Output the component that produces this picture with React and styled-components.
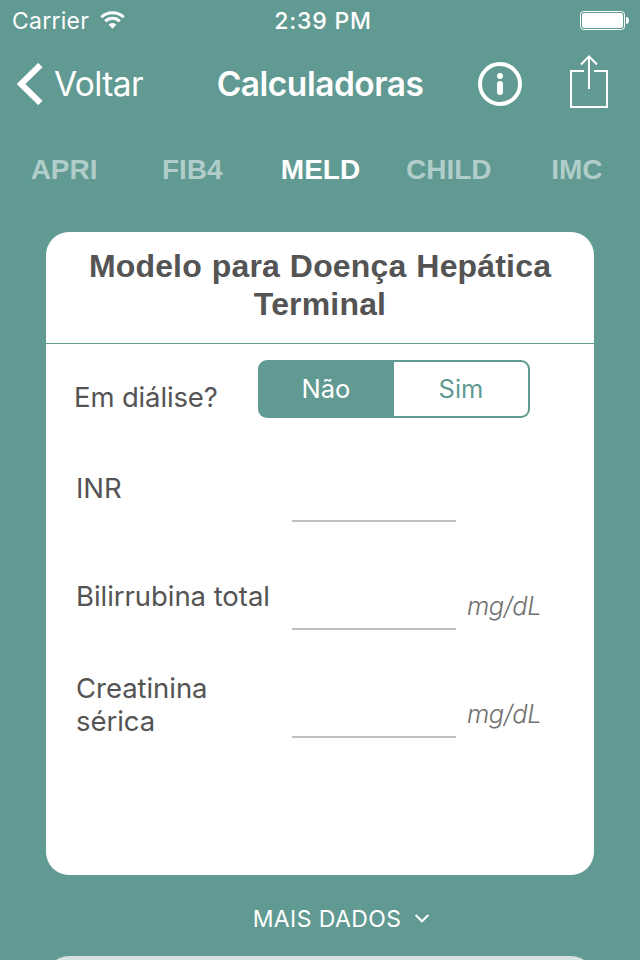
import React, { useState } from "react";
import styled, { createGlobalStyle } from "styled-components";

const GlobalStyle = createGlobalStyle`
    body {
        margin: 0;
        background: #619a92;
    }
    * {
        box-sizing: border-box;
    }
    button {
        padding: 0;
        border: 0;
        background: none;
        color: inherit;
        font: inherit;
        letter-spacing: inherit;
    }
    svg {
        display: block;
    }
`;

const Screen = styled.div`
    width: 640px;
    height: 960px;
    overflow: hidden;
    display: flex;
    flex-direction: column;
    background: #619a92;
    color: #fff;
    font-family: Inter, sans-serif;
`;

const StatusBar = styled.div`
    height: 40px;
    flex: none;
    padding: 0 11px 0 12px;
    display: grid;
    grid-template-columns: 1fr auto 1fr;
    align-items: center;
    font-size: 23px;
    line-height: 42px;
    svg {
        margin-bottom: 2px;
    }
`;

const Carrier = styled.div`
    display: flex;
    align-items: center;
    gap: 11px;
    letter-spacing: 0.25px;
`;

const Clock = styled.div`
    font-weight: 500;
    letter-spacing: 0.8px;
    padding-left: 5px;
`;

const Battery = styled.div`
    justify-self: end;
`;

const NavBar = styled.div`
    height: 88px;
    flex: none;
    padding: 0 32px 0 16px;
    display: grid;
    grid-template-columns: 1fr auto 1fr;
    align-items: center;
    font-size: 33.5px;
    line-height: 88px;
`;

const BackButton = styled.button`
    display: flex;
    align-items: center;
    gap: 11px;
    letter-spacing: -0.6px;
`;

const Title = styled.div`
    font-weight: 600;
    letter-spacing: -0.5px;
    padding-left: 16px;
`;

const Actions = styled.div`
    display: flex;
    justify-content: flex-end;
    align-items: center;
    gap: 48px;
`;

const Tabs = styled.div`
    height: 104px;
    flex: none;
    display: flex;
    align-items: flex-start;
    margin-right: -1px;
    padding-top: 22px;
    font: bold 28px/40px "Liberation Sans", sans-serif;
`;

const Tab = styled.button`
    flex: 1;
    text-align: center;
    color: ${(props) => (props.$active ? "#fff" : "#b0cdc9")};
`;

const Card = styled.div`
    height: 643px;
    flex: none;
    margin: 0 46px;
    border-radius: 23px;
    background: #fff;
    color: #545454;
`;

const CardTitle = styled.div`
    height: 112px;
    padding: 15px 30px 0;
    border-bottom: 1px solid #619a92;
    text-align: center;
    font: bold 32px/38px "Liberation Sans", sans-serif;
    letter-spacing: 0.17px;
    word-spacing: 0.8px;
`;

const Row = styled.div`
    height: 108px;
    display: flex;
    padding-left: 30px;
`;

const DialysisRow = styled(Row)`
    height: 91px;
    padding: 16px 0 0 28px;
`;

const Label = styled.div`
    width: 216px;
    padding: 0 20px 1px 0;
    align-self: center;
    font-size: 27.5px;
    line-height: 33px;
    letter-spacing: -0.05px;
`;

const DialysisLabel = styled(Label)`
    width: 184px;
    padding: 21px 0 0;
    align-self: flex-start;
    letter-spacing: -0.15px;
`;

const Segmented = styled.div`
    width: 272px;
    height: 58px;
    padding: 2px;
    display: flex;
    border-radius: 9px;
    background: #619a92;
`;

const Segment = styled.button`
    width: 134px;
    padding: 0 1px;
    font-size: 25.5px;
    line-height: 54px;
    color: ${(props) => (props.$active ? "#fff" : "#619a92")};
    background: ${(props) => (props.$active ? "#619a92" : "#fff")};
    &:first-child {
        border-radius: 7px 0 0 7px;
        padding-right: 3px;
    }
    &:last-child {
        border-radius: 0 7px 7px 0;
    }
`;

const Field = styled.input`
    width: 164px;
    height: 54px;
    margin-top: 33px;
    padding: 0;
    border: 0;
    border-bottom: 2px solid #c0c0c0;
    outline: 0;
    background: transparent;
    color: inherit;
    font: inherit;
    font-size: 27px;
`;

const Unit = styled.div`
    margin: 47px 0 0 11px;
    font-size: 25.5px;
    font-style: italic;
    font-weight: 300;
    line-height: 32px;
    letter-spacing: -0.4px;
    color: #707070;
`;

const MoreButton = styled.button`
    height: 81px;
    flex: none;
    padding: 6px 0 0 42px;
    display: flex;
    justify-content: center;
    align-items: center;
    gap: 14px;
    font-size: 23px;
    letter-spacing: 0.4px;
`;

const NextCard = styled.div`
    height: 60px;
    flex: none;
    margin: 0 46px;
    border-radius: 23px;
    background: #d7e1e0;
`;

const WifiIcon = () => (
    <svg width="25" height="18" viewBox="0 0 25 18" fill="none" stroke="#fff" strokeWidth="3">
        <path d="M1.3 6.3a16 16 0 0 1 22.4 0" />
        <path d="M5.2 10.3a10.4 10.4 0 0 1 14.6 0" />
        <path d="M12.5 17.7 8.6 13.6a5.6 5.6 0 0 1 7.8 0z" fill="#fff" stroke="none" />
    </svg>
);

const BatteryIcon = () => (
    <svg width="49" height="19" viewBox="0 0 49 19">
        <rect x="0.5" y="0.5" width="44" height="18" rx="3" fill="none" stroke="#fff" />
        <rect x="2" y="2" width="41" height="15" rx="2" fill="#fff" />
        <path d="M46 6c4 0 4 7 0 7z" fill="#fff" />
    </svg>
);

const BackIcon = () => (
    <svg width="27" height="42" viewBox="0 0 27 42" fill="none" stroke="#fff" strokeWidth="6">
        <path d="M24.4 2 5 21l19.4 19" />
    </svg>
);

const InfoIcon = () => (
    <svg width="44" height="44" viewBox="0 0 44 44" fill="none" stroke="#fff">
        <circle cx="22" cy="22" r="20" strokeWidth="4" />
        <circle cx="22" cy="14" r="3" fill="#fff" stroke="none" />
        <path d="M22 22v8" strokeWidth="6" strokeLinecap="round" />
    </svg>
);

const ShareIcon = () => (
    <svg width="38" height="58" viewBox="0 0 38 58" fill="none" stroke="#fff" strokeWidth="2">
        <path d="M14 16H1v36h36V16H24" />
        <path d="M19 34V2" />
        <path d="M11 9.5l8-8 8 8" />
    </svg>
);

const ChevronIcon = () => (
    <svg width="14" height="9" viewBox="0 0 14 9" fill="none" stroke="#fff" strokeWidth="2">
        <path d="M.6 1 7 7.3 13.4 1" />
    </svg>
);

const tabs = ["APRI", "FIB4", "MELD", "CHILD", "IMC"];

const fields = [
    { label: "INR" },
    { label: "Bilirrubina total", unit: "mg/dL" },
    { label: "Creatinina sérica", unit: "mg/dL" },
];

function App() {
    const [tab, setTab] = useState("MELD");
    const [dialysis, setDialysis] = useState("Não");

    return (
        <Screen>
            <GlobalStyle />
            <StatusBar>
                <Carrier>
                    <span>Carrier</span>
                    <WifiIcon />
                </Carrier>
                <Clock>2:39 PM</Clock>
                <Battery>
                    <BatteryIcon />
                </Battery>
            </StatusBar>
            <NavBar>
                <BackButton>
                    <BackIcon />
                    <span>Voltar</span>
                </BackButton>
                <Title>Calculadoras</Title>
                <Actions>
                    <InfoIcon />
                    <ShareIcon />
                </Actions>
            </NavBar>
            <Tabs>
                {tabs.map((name) => (
                    <Tab key={name} $active={name === tab} onClick={() => setTab(name)}>
                        {name}
                    </Tab>
                ))}
            </Tabs>
            <Card>
                <CardTitle>Modelo para Doença Hepática Terminal</CardTitle>
                <DialysisRow>
                    <DialysisLabel>Em diálise?</DialysisLabel>
                    <Segmented>
                        {["Não", "Sim"].map((option) => (
                            <Segment
                                key={option}
                                $active={option === dialysis}
                                onClick={() => setDialysis(option)}
                            >
                                {option}
                            </Segment>
                        ))}
                    </Segmented>
                </DialysisRow>
                {fields.map(({ label, unit }) => (
                    <Row key={label}>
                        <Label>{label}</Label>
                        <Field aria-label={label} />
                        {unit && <Unit>{unit}</Unit>}
                    </Row>
                ))}
            </Card>
            <MoreButton>
                <span>MAIS DADOS</span>
                <ChevronIcon />
            </MoreButton>
            <NextCard />
        </Screen>
    );
}

export default App;
